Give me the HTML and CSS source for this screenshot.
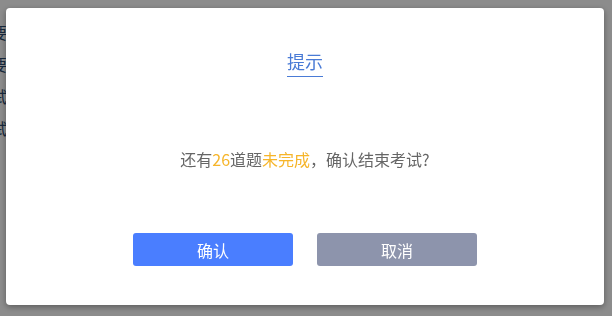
FILE: index.html
```html
<!DOCTYPE html>
<html lang="zh">
<head>
<meta charset="utf-8">
<link rel="stylesheet" href="styles.css">
</head>
<body>
<div class="page">
  <p class="bg-line">要求题目</p>
  <p class="bg-line">要求题目</p>
  <p class="bg-line">试题内容</p>
  <p class="bg-line">试题内容</p>
</div>
<div class="overlay">
  <div class="dialog">
    <div class="title-row"><span class="title">提示</span></div>
    <p class="message">还有<span class="hl">26</span>道题<span class="hl">未完成</span>，确认结束考试?</p>
    <div class="actions">
      <button class="btn btn-primary">确认</button>
      <button class="btn btn-cancel">取消</button>
    </div>
  </div>
</div>
</body>
</html>
```
FILE: styles.css
```css
* { box-sizing: border-box; }
html, body { margin: 0; padding: 0; }
body {
  width: 612px;
  height: 316px;
  overflow: hidden;
  background: #ffffff;
  font-family: "Microsoft YaHei", "Noto Sans CJK SC", "Noto Sans", sans-serif;
}
.page {
  display: flex;
  flex-direction: column;
  padding-top: 16px;
}
.bg-line {
  margin: 0 0 0 -9px;
  font-size: 16px;
  line-height: 32px;
  color: #2c4a6e;
}
.overlay {
  position: fixed;
  inset: 0;
  background: rgba(0, 0, 0, 0.45);
  padding: 8px 8px 11px 6px;
  display: flex;
}
.dialog {
  flex: 1;
  background: #ffffff;
  border-radius: 4px;
  box-shadow: 0 2px 6px rgba(0, 0, 0, 0.35);
  display: flex;
  flex-direction: column;
  align-items: center;
  padding-top: 41px;
}
.title-row { display: flex; justify-content: center; }
.title {
  font-size: 18px;
  line-height: 24px;
  color: #4a7bd6;
  padding-bottom: 3px;
  border-bottom: 1px solid #4a7bd6;
}
.message {
  margin: 70px 0 0;
  font-size: 16px;
  line-height: 24px;
  color: #666666;
}
.hl { color: #f6b52a; }
.actions {
  margin-top: 62px;
  display: flex;
  gap: 24px;
}
.btn {
  width: 160px;
  height: 33px;
  border: none;
  border-radius: 3px;
  color: #ffffff;
  font-family: inherit;
  font-size: 16px;
  padding: 0;
}
.btn-primary { background: #4a7eff; }
.btn-cancel { background: #8d94ac; }
```
